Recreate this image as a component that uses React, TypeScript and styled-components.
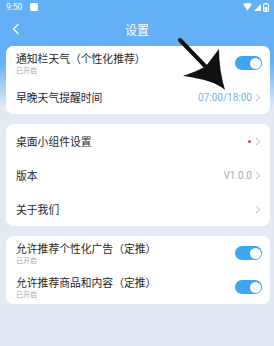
import styled, { createGlobalStyle } from 'styled-components';

const GlobalStyle = createGlobalStyle`
  html, body {
    margin: 0;
    padding: 0;
  }
  body {
    font-family: "Noto Sans CJK SC", "Noto Sans", sans-serif;
    -webkit-font-smoothing: antialiased;
  }
`;

type SwitchRow = { title: string; sub: string };

const topRows: SwitchRow[] = [{ title: '通知栏天气（个性化推荐）', sub: '已开启' }];

const bottomRows: SwitchRow[] = [
  { title: '允许推荐个性化广告（定推）', sub: '已开启' },
  { title: '允许推荐商品和内容（定推）', sub: '已开启' },
];

function Chevron() {
  return (
    <ChevronIcon width="6" height="9" viewBox="0 0 6 9">
      <polyline points="1,1 5,4.5 1,8" fill="none" stroke="#b8bcc2" strokeWidth="1" />
    </ChevronIcon>
  );
}

function Toggle() {
  return (
    <ToggleTrack>
      <ToggleKnob />
    </ToggleTrack>
  );
}

export default function App() {
  return (
    <>
      <GlobalStyle />
      <Page>
        <StatusBar>
          <Clock>9:50</Clock>
          <NotifySquare />
          <StatusIcons>
            <svg width="9" height="8" viewBox="0 0 9 8">
              <path d="M0 1.2 Q4.5 -1.4 9 1.2 L4.5 7.5 Z" fill="#fff" />
            </svg>
            <svg width="7" height="7" viewBox="0 0 7 7">
              <path d="M7 0 L7 7 L0 7 Z" fill="#fff" />
            </svg>
            <svg width="6" height="9" viewBox="0 0 6 9">
              <rect x="1.5" y="0" width="3" height="1" fill="#fff" />
              <rect x="0.6" y="1" width="4.8" height="7.4" rx="0.6" fill="none" stroke="#fff" strokeWidth="1.1" />
              <rect x="1.6" y="4" width="2.8" height="3.6" fill="#fff" />
            </svg>
          </StatusIcons>
        </StatusBar>

        <Header>
          <BackButton width="8" height="12" viewBox="0 0 8 12">
            <polyline points="6.5,1 1.5,6 6.5,11" fill="none" stroke="#fff" strokeWidth="1.3" />
          </BackButton>
          <Title>设置</Title>
        </Header>

        <Cards>
          <Card>
            {topRows.map((r) => (
              <Row key={r.title}>
                <TextBlock>
                  <RowTitle>{r.title}</RowTitle>
                  <RowSub>{r.sub}</RowSub>
                </TextBlock>
                <Toggle />
              </Row>
            ))}
            <Row>
              <RowTitle>早晚天气提醒时间</RowTitle>
              <Trailing>
                <Value $tone="blue">07:00/18:00</Value>
                <Chevron />
              </Trailing>
            </Row>
          </Card>

          <Card>
            <Row>
              <RowTitle>桌面小组件设置</RowTitle>
              <Trailing>
                <RedDot />
                <Chevron />
              </Trailing>
            </Row>
            <Row>
              <RowTitle>版本</RowTitle>
              <Trailing>
                <Value $tone="grey">V1.0.0</Value>
                <Chevron />
              </Trailing>
            </Row>
            <Row>
              <RowTitle>关于我们</RowTitle>
              <Trailing>
                <Chevron />
              </Trailing>
            </Row>
          </Card>

          <Card>
            {bottomRows.map((r) => (
              <Row key={r.title}>
                <TextBlock>
                  <RowTitle>{r.title}</RowTitle>
                  <RowSub>{r.sub}</RowSub>
                </TextBlock>
                <Toggle />
              </Row>
            ))}
          </Card>
        </Cards>

        {/* annotation arrow drawn over the screenshot */}
        <Arrow width="274" height="120" viewBox="0 0 274 120">
          <line x1="180" y1="40" x2="207" y2="68" stroke="#111" strokeWidth="4" strokeLinecap="round" />
          <path d="M225 90 Q214 80 183 76 Q200 70 206 66 Q212 58 219 49 Q219 70 225 90 Z" fill="#111" />
        </Arrow>
      </Page>
    </>
  );
}

const Page = styled.div`
  position: relative;
  width: 274px;
  min-height: 346px;
  background: linear-gradient(#64b0f6 0, #64b0f6 62px, #e3eaf4 108px, #e3eaf4 100%);
  overflow: hidden;
`;

const StatusBar = styled.div`
  height: 14px;
  display: flex;
  align-items: center;
  padding: 0 5px 0 6px;
  color: #fff;
`;

const Clock = styled.span`
  font-family: "Roboto", "Liberation Sans", sans-serif;
  font-size: 8.5px;
  line-height: 1;
`;

const NotifySquare = styled.span`
  width: 8px;
  height: 8px;
  margin-left: 8px;
  border-radius: 1.5px;
  background: #fff;
`;

const StatusIcons = styled.div`
  margin-left: auto;
  display: flex;
  align-items: center;
  gap: 2px;
`;

const Header = styled.div`
  position: relative;
  height: 32px;
  display: flex;
  align-items: center;
  justify-content: center;
`;

const BackButton = styled.svg`
  position: absolute;
  left: 12px;
  top: 9px;
`;

const Title = styled.div`
  color: #fff;
  font-size: 12px;
  line-height: 1;
`;

const Cards = styled.div`
  display: flex;
  flex-direction: column;
  gap: 10px;
  padding: 0 4px 0 6px;
`;

const Card = styled.div`
  background: #fff;
  border-radius: 7px;
  display: flex;
  flex-direction: column;
`;

const Row = styled.div`
  height: 34px;
  display: flex;
  align-items: center;
  justify-content: space-between;
  padding: 0 8px 0 10px;
`;

const TextBlock = styled.div`
  display: flex;
  flex-direction: column;
`;

const RowTitle = styled.div`
  font-size: 10.8px;
  line-height: 14px;
  color: #1f1f1f;
`;

const RowSub = styled.div`
  font-size: 7px;
  line-height: 10px;
  color: #a9a9a9;
`;

const Trailing = styled.div`
  display: flex;
  align-items: center;
  gap: 3px;
`;

const Value = styled.span<{ $tone: 'blue' | 'grey' }>`
  font-family: "Roboto", "Liberation Sans", sans-serif;
  font-size: 10px;
  color: ${(p) => (p.$tone === 'blue' ? '#72b6e4' : '#a8abb0')};
`;

const RedDot = styled.span`
  width: 3px;
  height: 3px;
  border-radius: 50%;
  background: #e0443e;
  margin-right: 1px;
`;

const ChevronIcon = styled.svg`
  display: block;
  margin-right: 1px;
`;

const ToggleTrack = styled.div`
  width: 27px;
  height: 14px;
  border-radius: 7px;
  background: #3ea6f0;
  display: flex;
  align-items: center;
  justify-content: flex-end;
  padding: 0 1.5px;
  box-sizing: border-box;
`;

const ToggleKnob = styled.span`
  width: 11px;
  height: 11px;
  border-radius: 50%;
  background: #fff;
`;

const Arrow = styled.svg`
  position: absolute;
  left: 0;
  top: 0;
  pointer-events: none;
`;
